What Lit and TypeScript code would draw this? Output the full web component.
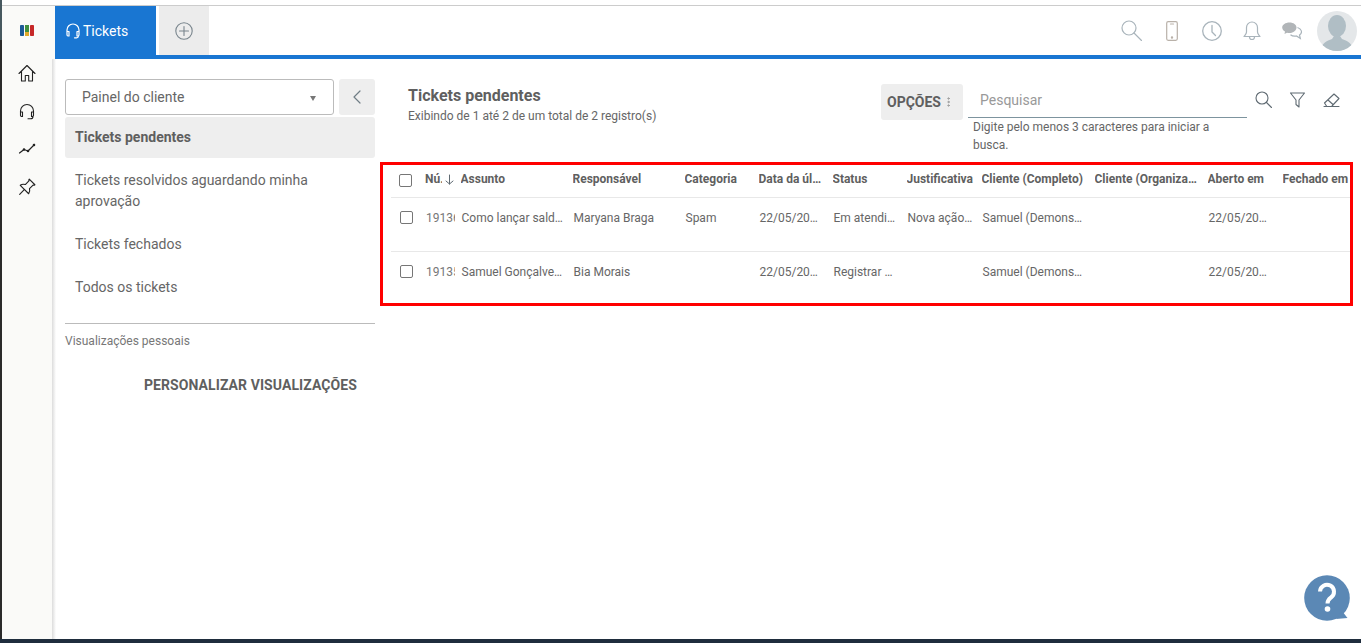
import { LitElement, html, css, svg } from "lit";
import { customElement } from "lit/decorators.js";

const COLS: [string, number][] = [
  ["Assunto", 112], ["Responsável", 112], ["Categoria", 74], ["Data da úl…", 74], ["Status", 74],
  ["Justificativa", 75], ["Cliente (Completo)", 113], ["Cliente (Organiza…", 113], ["Aberto em", 75], ["Fechado em", 67],
];
const ROWS = [
  { n: "19136", c: ["Como lançar sald…", "Maryana Braga", "Spam", "22/05/20…", "Em atendi…", "Nova ação…", "Samuel (Demons…", "", "22/05/20…", ""] },
  { n: "19135", c: ["Samuel Gonçalve…", "Bia Morais", "", "22/05/20…", "Registrar …", "", "Samuel (Demons…", "", "22/05/20…", ""] },
];

const ic = (w: number, h: number, body: unknown, stroke = "#9aa7b0", sw = 1.2) => html`<svg width=${w} height=${h} viewBox="0 0 ${w} ${h}" fill="none" stroke=${stroke} stroke-width=${sw} stroke-linecap="round" stroke-linejoin="round">${body}</svg>`;

@customElement("app-root")
export class AppRoot extends LitElement {
  static styles = css`
    :host { display: flex; flex-direction: column; height: 643px; overflow: hidden; font-family: Roboto, "Liberation Sans", sans-serif; color: #666; background: #fff; position: relative; }
    * { box-sizing: border-box; }
    .frame { height: 639px; display: flex; flex: none; }
    .edge { width: 2px; flex: none; background: linear-gradient(#47585f 0, #47585f 40px, #2a2a2a 40px); }
    .wrap { flex: 1; min-width: 0; display: flex; flex-direction: column; }
    .topstrip { height: 5px; flex: none; background: #fff; border-bottom: 0; }
    .shell { display: flex; flex: 1; min-height: 0; border-top: 1px solid #ccc; }
    .rail { width: 53px; flex: none; background: #fafaf8; display: flex; flex-direction: column; align-items: center; padding-right: 3px; }
    .logo { height: 49px; flex: none; display: flex; align-items: center; justify-content: center; }
    .rail-icons { display: flex; flex-direction: column; gap: 20px; padding-top: 9px; align-items: center; }
    .rail-icons svg { display: block; }
    .main { flex: 1; min-width: 0; display: flex; flex-direction: column; }
    .top { height: 53px; flex: none; display: flex; border-bottom: 4px solid #1976d2; }
    .tab { width: 101px; background: #1976d2; color: #fff; font-size: 14px; display: flex; align-items: center; gap: 2px; padding-left: 10px; height: 53px; flex: none; padding-bottom: 4px; }
    .add { width: 50px; height: 49px; margin-left: 3px; background: #ececec; display: flex; align-items: center; justify-content: center; flex: none; }
    .spacer { flex: 1; }
    .tools { display: flex; align-items: center; padding-right: 4px; height: 49px; }
    .tools svg { display: block; }
    .gap24 { margin-left: 24px; }
    .gap21 { margin-left: 21px; }
    .avatar { width: 40px; height: 40px; border-radius: 50%; background: #e4e7e9; overflow: hidden; margin-left: 15px; }
    .body { flex: 1; display: flex; min-height: 0; margin-left: -3px; padding-left: 3px; background: linear-gradient(90deg, #dcdcdc 0, #f6f6f6 3px, #fff 4px); }
    .side { width: 330px; flex: none; padding: 20px 0 0 10px; }
    .side-top { display: flex; gap: 5px; width: 310px; }
    .select { flex: 1; height: 36px; border: 1px solid #bbb; border-radius: 3px; display: flex; align-items: center; justify-content: space-between; padding: 0 17px 0 16px; font-size: 14px; color: #666; }
    .caret { width: 0; height: 0; border-left: 3px solid transparent; border-right: 3px solid transparent; border-top: 5px solid #777; margin-top: 3px; }
    .back { width: 36px; height: 36px; background: #eee; border-radius: 3px; display: flex; align-items: center; justify-content: center; }
    .nav { width: 310px; margin-top: 2px; }
    .nav div { font-size: 14px; line-height: 21px; padding: 11px 10px; color: #666; }
    .nav .on { background: #eee; border-radius: 3px; font-weight: 700; height: 41px; padding: 10px; color: #5f5f5f; margin-bottom: 1px; }
    .hr { width: 310px; height: 1px; background: #bbb; margin-top: 14px; }
    .pv { font-size: 12px; color: #777; margin-top: 10px; line-height: 14px; }
    .custom { font-size: 14px; font-weight: 700; color: #5f5f5f; margin: 28px 0 0 79px; line-height: 18px; letter-spacing: 0.08px; }
    .content { flex: 1; min-width: 0; display: flex; flex-direction: column; padding-top: 26px; }
    .head { display: flex; height: 77px; flex: none; align-items: flex-start; }
    .title { margin-left: 23px; flex: 1; padding-top: 1px; }
    .title h1 { margin: 0; font-size: 16px; line-height: 20px; font-weight: 700; color: #5f5f5f; }
    .title p { margin: 2px 0 0; font-size: 12px; line-height: 16px; color: #666; }
    .opc { width: 82px; height: 36px; margin-top: -1px; background: #eee; border-radius: 3px; display: flex; align-items: center; font-size: 14px; font-weight: 700; color: #5f5f5f; padding-left: 6px; gap: 6px; }
    .search { width: 279px; margin-left: 5px; margin-top: -1px; }
    .input { height: 34px; border-bottom: 1px solid #7d949e; padding: 0 0 2px 12px; font-size: 14px; color: #999; display: flex; align-items: center; }
    .hint { font-size: 12px; line-height: 17.5px; color: #666; padding: 1px 25px 0 5px; }
    .acts { display: flex; gap: 17px; margin-left: 8px; width: 106px; padding-top: 6px; }
    .acts svg { display: block; }
    .table-box { margin-left: -5px; margin-right: 8px; height: 144px; border: 3px solid #f00; padding-left: 8px; overflow: hidden; flex: none; }
    .hrow, .row { display: flex; width: 100%; border-bottom: 1px solid #e8e8e8; }
    .hrow { height: 33px; align-items: flex-start; padding-top: 6px; font-size: 12px; font-weight: 700; color: #5f5f5f; line-height: 16px; }
    .row { height: 54px; padding-top: 12px; font-size: 12px; color: #666; line-height: 16px; align-items: flex-start; }
    .row:last-child { border-bottom: none; }
    .chk { width: 13px; height: 13px; border: 1px solid #767676; border-radius: 2px; background: #fff; flex: none; }
    .c0 { width: 34px; flex: none; padding-left: 8px; }
    .hrow .c0 { padding-top: 3px; }
    .row .c0 { padding-left: 9px; padding-top: 1px; }
    .num { width: 35.5px; flex: none; }
    .num span { display: block; width: 29px; overflow: hidden; white-space: nowrap; margin-left: 1px; color: #777; }
    .hnum { width: 35.5px; flex: none; display: flex; gap: 3px; align-items: center; white-space: nowrap; }
    .hnum span { display: block; width: 17px; overflow: hidden; }
    .col { flex: none; overflow: hidden; white-space: nowrap; padding-right: 2px; }
    .row .col { padding-left: 1px; }
    .help { position: absolute; left: 1304px; top: 575px; }
    .foot { height: 4px; flex: none; background: #1f2d3d; }
  `;

  render() {
    return html`
      <div class="frame">
        <div class="edge"></div>
        <div class="wrap">
          <div class="topstrip"></div>
          <div class="shell">
            <div class="rail">
              <div class="logo">
                <svg width="14" height="11" viewBox="0 0 14 11"><rect x="0" y="0" width="4" height="11" rx=".8" fill="#1d5a96"/><rect x="5" y="0" width="4" height="7" fill="#3f8f3f"/><rect x="5" y="7" width="4" height="4" fill="#e0a92a"/><rect x="10" y="0" width="4" height="11" rx=".8" fill="#c62828"/></svg>
              </div>
              <div class="rail-icons">
                ${ic(18, 18, svg`<path d="M1 9.500 9 1.500l8 8M3.500 7.500V17h3.800v-5.500h3.400V17h3.800V7.500"/>`, "#222", 1.1)}
                ${ic(18, 18, svg`<path d="M2.500 11V9a6.500 6.500 0 0 1 13 0v2M2.500 10h2v4.500h-1a1.500 1.500 0 0 1-1-1.200zM15.500 10h-2v4.500h1a1.500 1.500 0 0 0 1-1.200zM15 14.500c0 1.500-1.200 2.300-2.500 2.300H10"/>`, "#222", 1.1)}
                ${ic(18, 18, svg`<path d="M1.500 13 6 9.500l4 1.500 6.500-6.500"/><circle cx="6" cy="9.500" r=".7"/><circle cx="10" cy="11" r=".7"/><circle cx="16" cy="5" r=".7"/>`, "#222", 1.2)}
                <svg width="18" height="18" viewBox="0 0 16 16" fill="none" stroke="#222" stroke-width="1" stroke-linejoin="round" stroke-linecap="round"><path d="M10 1l5 5c-.5.500-1 .500-1.600.300l-3.200 3.200c.5 1.700.3 3.200-.7 4.500L2 6.500c1.300-1 2.800-1.200 4.500-.7l3.200-3.200C9.500 2 9.500 1.500 10 1z"/><path d="M5.800 10.200 1.500 14.500"/></svg>
              </div>
            </div>
            <div class="main">
              <div class="top">
                <div class="tab">
                  ${ic(16, 16, svg`<path d="M2 9V7a6 6 0 0 1 12 0v2M2 8.500h2v4.500H3a1.200 1.200 0 0 1-1-1.200zM14 8.500h-2v4.500h1a1.200 1.200 0 0 0 1-1.200zM13.500 13a2 2 0 0 1-2 1.800H9.500"/>`, "#fff", 1.2)}
                  <span>Tickets</span>
                </div>
                <div class="add">
                  ${ic(18, 18, svg`<circle cx="9" cy="9" r="8.200"/><path d="M9 4.500v9M4.500 9h9"/>`, "#78848c", 1.1)}
                </div>
                <div class="spacer"></div>
                <div class="tools">
                  ${ic(21, 21, svg`<circle cx="8" cy="8" r="7"/><path d="M13 13l7.500 7.500"/>`, "#a9b4bb")}
                  <span class="gap24">${ic(12, 20, svg`<rect x=".7" y=".7" width="10.600" height="18.600" rx="1.500"/><path d="M4.500 3h3"/><circle cx="6" cy="16.500" r=".6"/>`, "#b9b1a9")}</span>
                  <span class="gap24">${ic(20, 20, svg`<circle cx="10" cy="10" r="9.300"/><path d="M10 4.500V11l3.500 3.500"/>`, "#a9b4bb", 1.3)}</span>
                  <span class="gap21">${ic(18, 20, svg`<path d="M9 1a5.500 5.500 0 0 0-5.500 5.500v4.500c0 2-1.500 3-2.500 4.500h16c-1-1.500-2.500-2.500-2.500-4.500V6.500A5.500 5.500 0 0 0 9 1ZM6.500 16a2.500 2.500 0 0 0 5 0"/>`, "#a9b4bb")}</span>
                  <span class="gap21"><svg width="20" height="18" viewBox="0 0 20 18"><path d="M7.500 .5c4 0 7 2.200 7 5s-3 5.500-7 5.500c-1 0-1.500 0-2.500-.3L2.500 12l.5-2.500C1.200 8.500 .2 7 .2 5.500.2 2.700 3.500 .5 7.500 .5z" fill="#b1b5b8"/><path d="M15.500 5.500c2.500 1 4 2.500 4 4.300 0 1.400-.8 2.500-2 3.200l.8 3.500-3.800-2.500c-2 .4-4.500 0-6-1.200" fill="none" stroke="#a9b4bb" stroke-width="1.200"/></svg></span>
                  <div class="avatar">
                    <svg width="40" height="40" viewBox="0 0 40 40"><ellipse cx="20" cy="15" rx="9" ry="11" fill="#b0bec5"/><path d="M4 40c0-8 6-10 11-12l2-3h6l2 3c5 2 11 4 11 12z" fill="#b0bec5"/></svg>
                  </div>
                </div>
              </div>
              <div class="body">
                <div class="side">
                  <div class="side-top">
                    <div class="select"><span>Painel do cliente</span><span class="caret"></span></div>
                    <div class="back">${ic(10, 16, svg`<path d="M8 2 2 8l6 6"/>`, "#6f7d85", 1.2)}</div>
                  </div>
                  <div class="nav">
                    <div class="on">Tickets pendentes</div>
                    <div>Tickets resolvidos aguardando minha aprovação</div>
                    <div>Tickets fechados</div>
                    <div>Todos os tickets</div>
                  </div>
                  <div class="hr"></div>
                  <div class="pv">Visualizações pessoais</div>
                  <div class="custom">PERSONALIZAR VISUALIZAÇÕES</div>
                </div>
                <div class="content">
                  <div class="head">
                    <div class="title"><h1>Tickets pendentes</h1><p>Exibindo de 1 até 2 de um total de 2 registro(s)</p></div>
                    <div class="opc"><span>OPÇÕES</span>${ic(3, 10, svg`<circle cx="1.500" cy="1.500" r=".7"/><circle cx="1.500" cy="5" r=".7"/><circle cx="1.500" cy="8.500" r=".7"/>`, "#999", 1)}</div>
                    <div class="search"><div class="input">Pesquisar</div><div class="hint">Digite pelo menos 3 caracteres para iniciar a busca.</div></div>
                    <div class="acts">
                      ${ic(17, 17, svg`<circle cx="7" cy="7" r="6"/><path d="M11.500 11.500l5 5"/>`, "#5f6a72", 1.1)}
                      ${ic(17, 17, svg`<path d="M1.500 2h14L10 9v7l-3-2.500V9z"/>`, "#5f6a72", 1.1)}
                      ${ic(17, 17, svg`<path d="M1 15.500h15M3.500 15 1.500 12 11 3l5 4.500L9 15M5 9l5 4.500"/>`, "#5f6a72", 1.1)}
                    </div>
                  </div>
                  <div class="table-box">
                    <div class="hrow">
                      <div class="c0"><div class="chk"></div></div>
                      <div class="hnum"><span>Nú.</span>${ic(9, 11, svg`<path d="M4.500 1v9M1 7l3.500 3L8 7"/>`, "#5f6a72", 1)}</div>
                      ${COLS.map(([t, w]) => html`<div class="col" style="width:${w}px">${t}</div>`)}
                    </div>
                    ${ROWS.map((r) => html`
                      <div class="row">
                        <div class="c0"><div class="chk"></div></div>
                        <div class="num"><span>${r.n}</span></div>
                        ${r.c.map((t, i) => html`<div class="col" style="width:${COLS[i][1]}px">${t}</div>`)}
                      </div>`)}
                  </div>
                </div>
              </div>
            </div>
          </div>
        </div>
      </div>
      <div class="foot"></div>
      <div class="help">
        <svg width="46" height="47" viewBox="0 0 46 47"><circle cx="23" cy="23" r="22.800" fill="#5b88b5"/><path d="M38 36l5.500 7L32 44z" fill="#5b88b5"/><path d="M16 16.500a7 7 0 1 1 11 6c-2 1.500-3.500 2.500-3.500 6" fill="none" stroke="#fff" stroke-width="4"/><circle cx="23.500" cy="34" r="2.800" fill="#fff"/></svg>
      </div>
    `;
  }
}
